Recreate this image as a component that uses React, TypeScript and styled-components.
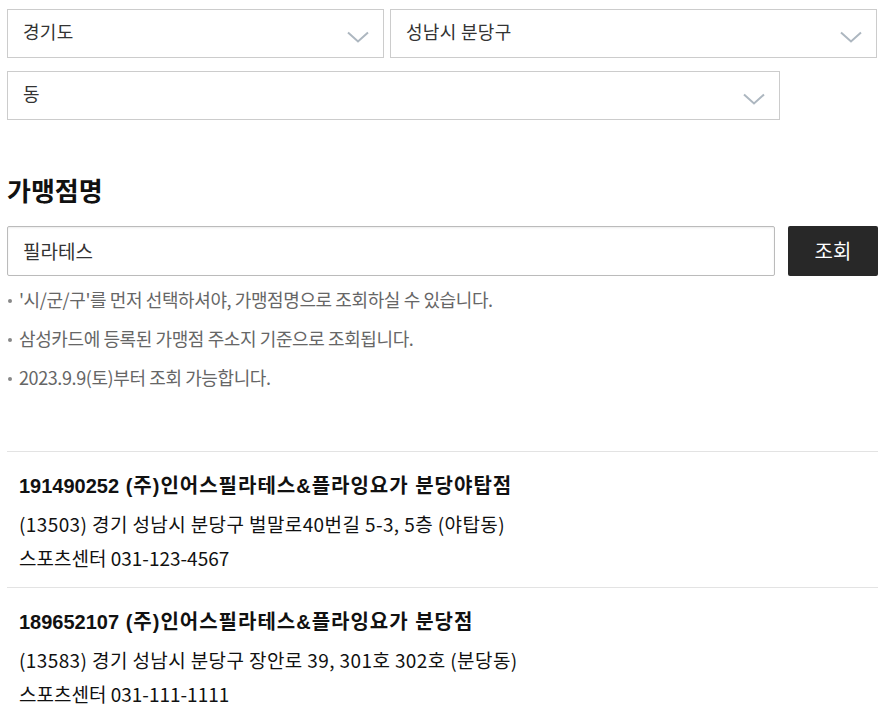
import React from 'react'
import styled, { createGlobalStyle } from 'styled-components'

const GlobalStyle = createGlobalStyle`
  body {
    margin: 0;
    background: #fff;
    font-family: "Noto Sans CJK KR", "Liberation Sans", sans-serif;
    color: #222;
  }
`

interface Store {
  id: string
  name: string
  address: string
  phone: string
}

const stores: Store[] = [
  {
    id: '191490252',
    name: '(주)인어스필라테스&플라잉요가 분당야탑점',
    address: '(13503) 경기 성남시 분당구 벌말로40번길 5-3, 5층 (야탑동)',
    phone: '스포츠센터 031-123-4567',
  },
  {
    id: '189652107',
    name: '(주)인어스필라테스&플라잉요가 분당점',
    address: '(13583) 경기 성남시 분당구 장안로 39, 301호 302호 (분당동)',
    phone: '스포츠센터 031-111-1111',
  },
]

const notices = [
  "'시/군/구'를 먼저 선택하셔야, 가맹점명으로 조회하실 수 있습니다.",
  '삼성카드에 등록된 가맹점 주소지 기준으로 조회됩니다.',
  '2023.9.9(토)부터 조회 가능합니다.',
]

function Chevron() {
  return (
    <svg width="22" height="12" viewBox="0 0 22 12" fill="none">
      <path d="M1 1.5 L11 10.5 L21 1.5" stroke="#adb7c0" strokeWidth="2" />
    </svg>
  )
}

function Select({ value, width }: { value: string; width: number }) {
  return (
    <SelectBox width={width}>
      <span>{value}</span>
      <Chevron />
    </SelectBox>
  )
}

export default function App() {
  return (
    <Page>
      <GlobalStyle />
      <SelectRow>
        <Select value="경기도" width={377} />
        <Select value="성남시 분당구" width={487} />
      </SelectRow>
      <SelectRow>
        <Select value="동" width={773} />
      </SelectRow>

      <Heading>가맹점명</Heading>
      <SearchRow>
        <SearchInput defaultValue="필라테스" />
        <SearchButton>조회</SearchButton>
      </SearchRow>

      <NoticeList>
        {notices.map((n) => (
          <li key={n}>{n}</li>
        ))}
      </NoticeList>

      <Results>
        {stores.map((s) => (
          <ResultItem key={s.id}>
            <StoreName>
              <StoreId>{s.id}</StoreId> {s.name}
            </StoreName>
            <StoreAddress>{s.address}</StoreAddress>
            <StorePhone>{s.phone}</StorePhone>
          </ResultItem>
        ))}
      </Results>
    </Page>
  )
}

const Page = styled.div`
  width: 871px;
  padding: 9px 0 0 7px;
`

const SelectRow = styled.div`
  display: flex;
  gap: 6px;
  margin-bottom: 13px;
`

const SelectBox = styled.div<{ width: number }>`
  box-sizing: border-box;
  width: ${({ width }) => width}px;
  height: 49px;
  border: 1px solid #ccc;
  background: #fff;
  display: flex;
  align-items: center;
  justify-content: space-between;
  padding: 0 14px 2px 15px;
  font-size: 18px;
  letter-spacing: 0.3px;
  color: #333;

  span {
    margin-top: -3px;
  }

  svg {
    margin-top: 8px;
  }
`

const Heading = styled.h2`
  margin: 53px 0 19px;
  font-size: 26px;
  font-weight: 700;
  color: #111;
  line-height: 34px;
`

const SearchRow = styled.div`
  display: flex;
  gap: 13px;
`

const SearchInput = styled.input`
  box-sizing: border-box;
  width: 768px;
  height: 50px;
  border: 1px solid #bbb;
  border-radius: 2px;
  box-shadow: inset 0 1px 2px rgba(0, 0, 0, 0.08);
  padding: 0 15px 2px;
  font-family: inherit;
  font-size: 19px;
  color: #333;
  outline: none;
`

const SearchButton = styled.button`
  box-sizing: border-box;
  width: 90px;
  height: 50px;
  border: none;
  border-radius: 2px;
  background: #282828;
  color: #fff;
  font-family: inherit;
  font-size: 20px;
  padding-bottom: 3px;
`

const NoticeList = styled.ul`
  list-style: none;
  margin: 4px 0 0;
  padding: 0;

  li {
    position: relative;
    padding-left: 12px;
    line-height: 39px;
    font-size: 18px;
    color: #666;
    letter-spacing: -0.4px;
  }

  li::before {
    content: '';
    position: absolute;
    left: 1px;
    top: 19px;
    width: 4px;
    height: 4px;
    border-radius: 50%;
    background: #888;
  }
`

const Results = styled.div`
  margin-top: 54px;
`

const ResultItem = styled.div`
  border-top: 1px solid #e3e3e3;
  padding: 0 12px 12px;
  font-size: 19px;
  color: #111;
  line-height: 34px;
`

const StoreName = styled.div`
  font-family: "Liberation Sans", "Noto Sans CJK KR", sans-serif;
  font-size: 20px;
  font-weight: 700;
  letter-spacing: 1px;
  padding-top: 17px;
`

const StoreId = styled.span`
  letter-spacing: 0;
`

const StoreAddress = styled.div`
  margin-top: 4px;
  letter-spacing: 0.4px;
`

const StorePhone = styled.div``
